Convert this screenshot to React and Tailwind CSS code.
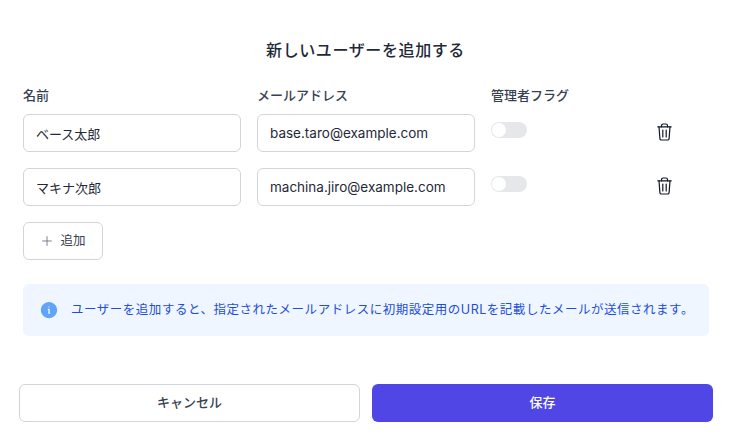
import { HiInformationCircle, HiOutlinePlus } from 'react-icons/hi2';

const users = [
    { name: 'ベース太郎', email: 'base.taro@example.com' },
    { name: 'マキナ次郎', email: 'machina.jiro@example.com' },
];

const fontStack = "font-['Inter','Noto_Sans_CJK_JP',sans-serif]";

const TrashIcon = () => (
    <svg viewBox="0 0 15 18" fill="none" stroke="currentColor" strokeWidth="1.2" strokeLinecap="round" strokeLinejoin="round" className="w-[15px] h-[18px] mb-[2px] text-[#111827]">
        <path d="M4.5 3.8V2.6A1.6 1.6 0 0 1 6.1 1h2.8a1.6 1.6 0 0 1 1.6 1.6v1.2" />
        <path d="M0.8 3.8h13.4" />
        <path d="M2 3.8l.9 11.8A1.5 1.5 0 0 0 4.4 17h6.2a1.5 1.5 0 0 0 1.5-1.4L13 3.8" />
        <path d="M5.8 7v7M9.2 7v7" />
    </svg>
);

const UserRow = ({ user }) => (
    <div className="flex gap-4">
        <input
            readOnly
            value={user.name}
            className="w-[218px] h-[38px] px-3 bg-white border border-[#d1d5db] rounded-md text-[13px] text-[#1f2937] outline-none"
        />
        <input
            readOnly
            value={user.email}
            className="w-[218px] h-[38px] px-3 bg-white border border-[#d1d5db] rounded-md text-[13.5px] text-[#1f2937] outline-none"
        />
        <div className="w-[36px] pt-2">
            <div className="w-[36px] h-4 bg-[#e5e7eb] rounded-full flex items-center p-px">
                <div className="w-[14px] h-[14px] bg-white rounded-full"></div>
            </div>
        </div>
        <div className="flex-1 flex items-center justify-end pr-[37px]">
            <TrashIcon />
        </div>
    </div>
);

const App = () => {
    return (
        <div className={`w-[731px] h-[443px] bg-white overflow-hidden ${fontStack}`}>
            <h2 className="pt-[39px] text-center text-base leading-[22px] font-medium tracking-[0.6px] text-[#1f2937]">
                新しいユーザーを追加する
            </h2>

            <div className="px-[23px] pt-[25px] w-[732px]">
                {/* Header */}
                <div className="flex gap-4 h-[28px] text-[13px] font-medium text-[#374151]">
                    <div className="w-[218px]">名前</div>
                    <div className="w-[218px]">メールアドレス</div>
                    <div>管理者フラグ</div>
                </div>

                {/* Rows */}
                <div className="flex flex-col gap-4">
                    {users.map((user) => (
                        <UserRow key={user.email} user={user} />
                    ))}
                </div>

                <button className="mt-4 w-20 h-[38px] flex items-center justify-center gap-[6px] bg-white border border-[#d1d5db] rounded-md text-[12.5px] text-[#374151]">
                    <HiOutlinePlus className="w-[14px] h-[14px] text-[#6b7280]" />
                    追加
                </button>

                {/* Info */}
                <div className="mt-6 h-[52px] px-4 flex items-center gap-3 bg-[#eff6ff] rounded-md">
                    <HiInformationCircle className="w-5 h-5 text-[#60a5fa] shrink-0" />
                    <p className="text-[12.5px] tracking-[0.52px] whitespace-nowrap text-[#1d4ed8]">
                        ユーザーを追加すると、指定されたメールアドレスに初期設定用のURLを記載したメールが送信されます。
                    </p>
                </div>
            </div>

            {/* Footer */}
            <div className="mt-12 px-[19px] w-[732px] flex gap-3">
                <button className="w-[341px] h-[38px] bg-white border border-[#d1d5db] rounded-md text-[13px] font-medium text-[#374151]">
                    キャンセル
                </button>
                <button className="w-[341px] h-[38px] bg-[#4f46e5] rounded-md text-[13px] font-medium text-white">
                    保存
                </button>
            </div>
        </div>
    );
};

export default App;
